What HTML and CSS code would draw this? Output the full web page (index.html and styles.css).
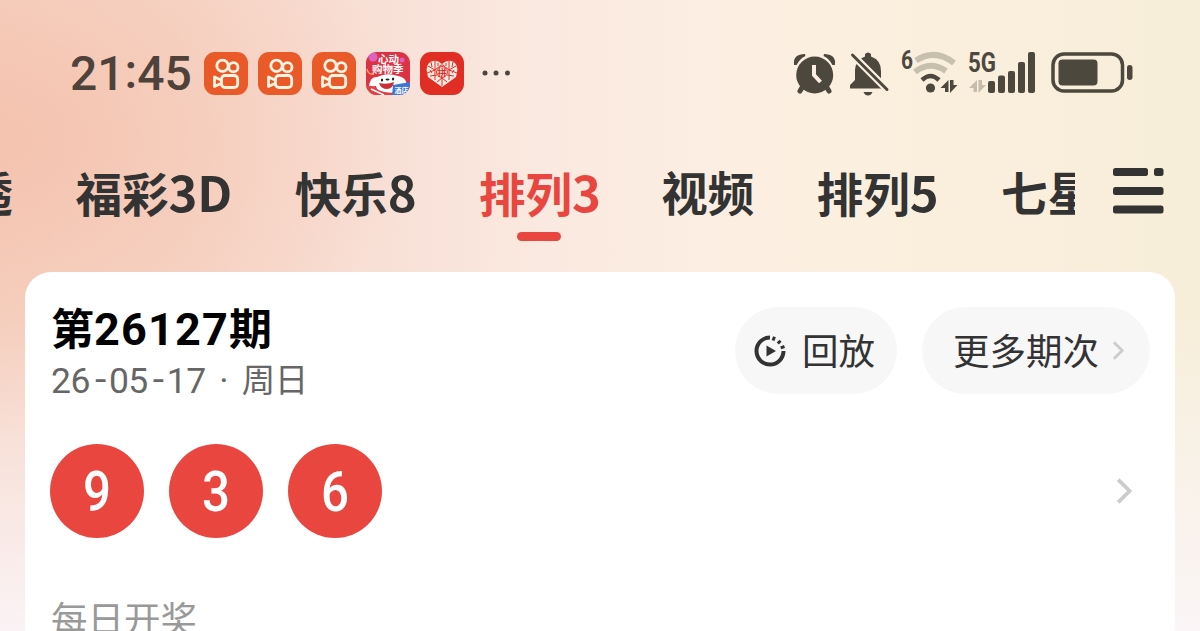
FILE: index.html
```
<!DOCTYPE html>
<html lang="zh-CN">
<head>
    <meta charset="UTF-8">
    <meta name="viewport" content="width=device-width, initial-scale=1.0">
    <title>排列3</title>
    <link rel="stylesheet" href="styles.css">
</head>
<body>

<!-- shared shapes -->
<svg class="defs" width="0" height="0">
    <symbol id="kuaishou" viewBox="0 0 44 44">
        <rect width="44" height="43" rx="11" fill="#ea5a28"/>
        <g fill="none" stroke="#fff3e2" stroke-width="2.8" stroke-linejoin="round">
            <circle cx="18.5" cy="13.8" r="5.7"/>
            <circle cx="29.4" cy="15.2" r="4.6"/>
            <rect x="17.5" y="23.5" width="16.2" height="12" rx="3.5"/>
            <path d="M17 28 L10.5 25 V34.5 L17 31.5"/>
        </g>
    </symbol>
    <symbol id="arrow" viewBox="0 0 14 22">
        <path d="M2 2 L11 11 L2 20" fill="none" stroke="#ccc" stroke-width="3"/>
    </symbol>
</svg>

<header class="status-bar">
    <div class="time">21<span class="colon">:</span>45</div>
    <div class="apps">
        <svg class="app"><use href="#kuaishou"/></svg>
        <svg class="app"><use href="#kuaishou"/></svg>
        <svg class="app"><use href="#kuaishou"/></svg>
        <svg class="app" viewBox="0 0 44 44">
            <clipPath id="jd"><rect width="44" height="43" rx="11"/></clipPath>
            <g clip-path="url(#jd)">
                <rect width="44" height="43" fill="#dc3344"/>
                <circle cx="7" cy="5" r="4.5" fill="#dc62c4"/>
                <circle cx="36" cy="8" r="2.5" fill="#dc62c4"/>
                <path d="M1 17 Q2 23 8 22" fill="none" stroke="#f1a04b" stroke-width="1.5"/>
                <text class="jd-text" x="12" y="10.5">心动</text>
                <text class="jd-text" x="6" y="21">购物季</text>
                <path d="M3 35 Q4 24 11 25 Q21 20 32 24 Q40 25 41 33 L35 34 Q30 42 21 42 Q11 41 10 34 Z" fill="#fff"/>
                <ellipse cx="16" cy="28" rx="1.2" ry="1.5" fill="#222"/>
                <ellipse cx="27" cy="27" rx="1.2" ry="1.5" fill="#222"/>
                <ellipse cx="21.5" cy="27.500" rx="2" ry="1.1" fill="#222"/>
                <path d="M13 31 Q21 33 28 30 Q27 37 21 37 Q15 37 13 31" fill="#c8313a"/>
                <path d="M0 35 Q7 32 12 38 Q22 42 30 40 V44 H0 Z" fill="#df4044"/>
                <path d="M5 37 L18 43" stroke="#fff" stroke-width="1.5"/>
                <path d="M27 33 L44 30 V44 H26 Z" fill="#3c77d8"/>
                <text class="jd-tag" x="28.500" y="41">酒店</text>
            </g>
        </svg>
        <svg class="app" viewBox="0 0 44 44">
            <rect width="44" height="43" rx="11" fill="#e02e24"/>
            <path d="M22 35 L8 25 Q5 15 9 11 Q15 6 22 12 Q29 6 35 11 Q39 15 36 25 Z" fill="#fbe9e2"/>
            <g fill="none" stroke="#e02e24" stroke-width="1">
                <path d="M15 9 V28 M29 9 V28 M8 14 L15 18 L21 13 M36 14 L29 18 L23 13 M7 21 L15 18 M37 21 L29 18 M22 12 V15 M22 25 V34 M11 10 L12 15 M33 10 L32 15 M17 23 L10 24 M27 23 L34 24 M17 30 L22 26 L27 30 M10 18 L12 21 M34 18 L32 21 M18 11 V14 M26 11 V14"/>
                <circle cx="22" cy="20" r="5.4"/>
            </g>
            <text class="pdd-text" x="17.5" y="23.5">拼</text>
        </svg>
        <svg class="dots" width="30" height="6">
            <g fill="#4d453f"><circle cx="3" cy="3" r="2.5"/><circle cx="14" cy="3" r="2.5"/><circle cx="25.5" cy="3" r="2.5"/></g>
        </svg>
    </div>

    <svg class="signals" viewBox="790 44 346 56">
        <g class="ink">
            <!-- alarm -->
            <circle cx="814.7" cy="75" r="18.5"/>
            <path d="M800 91 L803 86 M829 91 L826 86" stroke-width="5" class="line"/>
            <path d="M795 64 Q794 55 805 55 Q799 58 796 64 Z M834 64 Q835 55 824 55 Q830 58 833 64 Z" stroke-width="2" class="join"/>
            <path d="M814 65 V75 L820.500 82" fill="none" stroke="#fcefe0" stroke-width="4"/>
            <!-- muted bell -->
            <path d="M850 85 L855 80 V70 Q855 66 857 63 L882 88.500 H850 Z"/>
            <path d="M861 58.500 L865 56.500 V54 Q868 51 871 54 V56.500 Q881 60 881 71 V78.500 Z"/>
            <path d="M863.500 92 H872.500 Q871 95.500 868 95.500 Q865 95.500 863.500 92 Z"/>
            <path d="M851 53.500 L889 91.500" stroke="#fcefe0" stroke-width="7"/>
            <path d="M852.500 55 L887 89.500" stroke-width="3" class="line"/>
            <!-- wifi -->
            <g fill="none" stroke-width="6">
                <path d="M916 60.500 Q935 48 954 63" stroke="#c7c0ad"/>
                <path d="M915 72 Q930 60 946 71" stroke="#c7c0ad"/>
                <path d="M922 80 Q930.500 72 939 80" stroke="#4c483e" stroke-width="4.500"/>
            </g>
            <circle cx="930.500" cy="88" r="4.600"/>
            <g id="updown">
                <path d="M940.500 88 L948.500 80 V92 H945 V88 Z M950 80 H953.500 V85 H957.500 L950 93 Z"/>
            </g>
            <use href="#updown" transform="translate(28.500 0)" opacity=".3"/>
            <text class="wifi-num" x="901" y="69" textLength="12" lengthAdjust="spacingAndGlyphs">6</text>
            <text class="net" x="968" y="72" textLength="28" lengthAdjust="spacingAndGlyphs">5G</text>
            <rect x="988" y="81" width="7" height="12" rx="2"/>
            <rect x="998" y="75.500" width="7" height="17.500" rx="2"/>
            <rect x="1008" y="71" width="7" height="22" rx="2"/>
            <rect x="1018" y="62" width="7" height="31" rx="2"/>
            <rect x="1028" y="52" width="7" height="41" rx="2"/>
            <!-- battery -->
            <rect x="1053" y="54" width="69.500" height="37" rx="11" fill="none" stroke="#4c483e" stroke-width="3.500"/>
            <rect x="1058.500" y="59.500" width="39" height="26" rx="4"/>
            <rect x="1127" y="65" width="5.500" height="15" rx="2.700"/>
        </g>
    </svg>
</header>

<nav class="nav">
    <div class="tabs">
        <a class="tab">大乐透</a>
        <a class="tab">福彩<span class="latin">3D</span></a>
        <a class="tab">快乐<span class="latin">8</span></a>
        <a class="tab active">排列<span class="latin">3</span></a>
        <a class="tab">视频</a>
        <a class="tab">排列<span class="latin">5</span></a>
        <a class="tab">七星彩</a>
    </div>
    <svg class="menu" width="52" height="48">
        <g fill="#333">
            <rect x="0" y="0" width="35" height="8" rx="2.500"/>
            <rect x="41" y="0" width="9.500" height="8" rx="2.500"/>
            <rect x="0" y="19" width="50.500" height="8" rx="2.500"/>
            <rect x="0" y="37.500" width="50.500" height="8" rx="2.500"/>
        </g>
    </svg>
</nav>

<main class="card">
    <div class="card-head">
        <div class="issue">
            <h1>第<span class="num">26127</span>期</h1>
            <p class="date">26<span class="dash">-</span>05<span class="dash">-</span>17<span class="dot">·</span><span class="week">周日</span></p>
        </div>
        <div class="actions">
            <button class="pill replay">
                <svg width="32" height="32" viewBox="0 0 32 32">
                    <path d="M16 2.500 A13.500 13.500 0 1 0 29.500 16" fill="none" stroke="#333" stroke-width="4"/>
                    <path d="M19 5.500 L20.500 1.800 M23.800 8.500 L26.500 5.700 M26.700 12.800 L30.500 11.500" stroke="#333" stroke-width="3"/>
                    <path d="M12.500 10.500 L22 16 L12.500 21.500 Z" fill="#333"/>
                </svg>
                <span>回放</span>
            </button>
            <button class="pill more"><span>更多期次</span><svg width="13" height="21"><use href="#arrow"/></svg></button>
        </div>
    </div>
    <div class="result">
        <div class="balls">
            <div class="ball"><span>9</span></div>
            <div class="ball"><span>3</span></div>
            <div class="ball"><span>6</span></div>
        </div>
        <svg class="go" width="19" height="28"><use href="#arrow"/></svg>
    </div>
    <p class="note">每日开奖</p>
</main>

</body>
</html>
```

FILE: styles.css
```
* {
    box-sizing: border-box;
}
html {
    overflow: hidden;
}
body {
    margin: 0;
    height: 631px;
    overflow: hidden;
    font-family: "Noto Sans CJK SC", sans-serif;
    color: #333;
    background:
        radial-gradient(ellipse 420px 300px at 0 140px, rgba(243, 182, 158, 0.6), rgba(243, 182, 158, 0)),
        linear-gradient(to bottom, rgba(251, 246, 250, 0) 50%, rgba(251, 246, 250, 0.9)),
        linear-gradient(to right, #f6d5c6 0, #f7d9cc 17%, #f9e2d9 35%, #fae9e0 45%, #fcefe2 62%, #faefdc 80%, #f7eeda 100%);
}
.defs {
    position: absolute;
}

/* status bar */
.status-bar {
    display: flex;
    align-items: center;
    height: 148px;
    padding: 0 64px 0 70px;
}
.time {
    width: 134px;
    font-family: Roboto, sans-serif;
    font-size: 48px;
    font-weight: 500;
    line-height: 56px;
    color: #4f423b;
}
.colon {
    display: inline-block;
    transform: translateY(-2px);
}
.apps {
    display: flex;
    align-items: center;
    gap: 10px;
}
.app {
    width: 44px;
    height: 44px;
}
.dots {
    margin-left: 8px;
    margin-top: -2px;
}
.jd-text {
    font-size: 10.5px;
    font-weight: bold;
    fill: #fff;
}
.jd-tag {
    font-size: 7px;
    font-weight: bold;
    fill: #fff;
}
.pdd-text {
    font-size: 9px;
    font-weight: bold;
    fill: #e02e24;
}
.signals {
    width: 346px;
    height: 56px;
    margin-left: auto;
    margin-top: -4px;
}
.ink {
    fill: #4c483e;
}
.line, .join {
    stroke: #4c483e;
}
.line {
    stroke-linecap: round;
}
.wifi-num, .net {
    font-family: Roboto, sans-serif;
    font-weight: bold;
}
.wifi-num {
    font-size: 25px;
}
.net {
    font-size: 28px;
}

/* lottery tabs */
.nav {
    display: flex;
    height: 124px;
}
.tabs {
    display: flex;
    gap: 62.4px;
    width: 1075px;
    overflow: hidden;
}
.tab {
    position: relative;
    flex: none;
    height: 110px;
    font-size: 46.5px;
    font-weight: bold;
    line-height: 85px;
    white-space: nowrap;
}
.tab:first-child {
    margin-left: -126.5px;
}
.latin {
    font-size: 49px;
}
.active {
    margin-right: -2px;
    color: #e9463f;
}
.active::after {
    content: "";
    position: absolute;
    left: 50%;
    top: 84px;
    width: 44px;
    height: 9px;
    margin-left: -23px;
    border-radius: 5px;
    background-color: #e9463f;
}
.menu {
    margin: 20px 0 0 38px;
}

/* result card */
.card {
    height: 359px;
    overflow: hidden;
    margin: 0 25px;
    padding: 32px 25px 0 26px;
    border-radius: 26px 26px 0 0;
    background-color: white;
}
.card-head {
    display: flex;
    justify-content: space-between;
    height: 140px;
}
h1 {
    margin: 0;
    font-size: 43px;
    line-height: 44px;
    color: #000;
}
.num {
    font-family: Roboto, sans-serif;
    font-size: 45px;
    letter-spacing: 1.2px;
}
.date {
    display: flex;
    margin: 7px 0 0;
    font-family: Roboto, "Noto Sans CJK SC", sans-serif;
    font-size: 35.5px;
    letter-spacing: -0.5px;
    line-height: 44px;
    color: #666;
}
.dash {
    width: 19px;
    font-family: "Liberation Mono", monospace;
    text-align: center;
}
.dot {
    width: 36px;
    text-align: center;
}
.week {
    font-size: 33.5px;
}
.actions {
    display: flex;
    gap: 25px;
    margin-top: 3px;
}
.pill {
    display: flex;
    align-items: center;
    height: 87px;
    padding: 0;
    border: none;
    border-radius: 44px;
    background-color: #f7f7f7;
    font-family: inherit;
    font-size: 36.5px;
    color: #333;
}
.pill span {
    margin-top: -2px;
}
.replay {
    gap: 16px;
    width: 162px;
    padding-left: 19px;
}
.more {
    gap: 13px;
    width: 228px;
    padding-left: 31px;
}
.result {
    display: flex;
    align-items: center;
    justify-content: space-between;
    margin-left: -1px;
    padding-right: 16px;
}
.balls {
    display: flex;
    gap: 25px;
}
.ball {
    width: 94px;
    height: 94px;
    border-radius: 50%;
    background-color: #e9463f;
    font-family: Roboto, sans-serif;
    font-size: 56px;
    font-weight: 500;
    line-height: 97px;
    text-align: center;
    color: white;
}
.ball span {
    display: inline-block;
    transform: scaleX(0.88);
}
.note {
    margin: 53px 0 0;
    font-size: 36.5px;
    line-height: 54px;
    color: #999;
}
```
